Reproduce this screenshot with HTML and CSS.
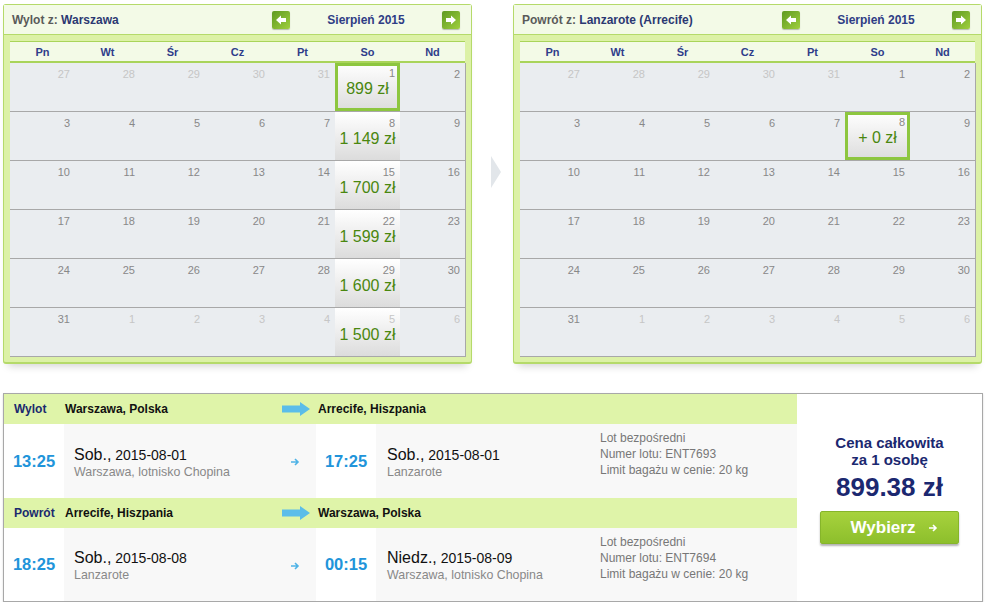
FILE: index.html
```html
<!DOCTYPE html>
<html lang="pl">
<head>
  <meta charset="UTF-8">
  <title>Wybór lotu</title>
  <link rel="stylesheet" href="styles.css">
</head>
<body>
  <div class="page">
    <div class="calendars">
      <div class="panel">
        <div class="panel-head">
          <div class="route"><span class="route-label">Wylot z:</span> Warszawa</div>
          <div class="month-nav">
            <span class="nav-btn"><svg width="10" height="10" viewBox="0 0 10 10"><path d="M0 5 L5 0.5 V3 H10 V7 H5 V9.5 Z" fill="#fff"/></svg></span>
            <span class="month">Sierpień 2015</span>
            <span class="nav-btn"><svg width="10" height="10" viewBox="0 0 10 10"><path d="M10 5 L5 0.5 V3 H0 V7 H5 V9.5 Z" fill="#fff"/></svg></span>
          </div>
        </div>
        <div class="panel-body">
          <div class="days">
            <span>Pn</span><span>Wt</span><span>Śr</span><span>Cz</span><span>Pt</span><span>So</span><span>Nd</span>
          </div>
          <div class="cells">
            <div class="cell other"><span class="num">27</span></div>
            <div class="cell other"><span class="num">28</span></div>
            <div class="cell other"><span class="num">29</span></div>
            <div class="cell other"><span class="num">30</span></div>
            <div class="cell other"><span class="num">31</span></div>
            <div class="cell priced selected"><span class="num">1</span><span class="price">899 zł</span></div>
            <div class="cell"><span class="num">2</span></div>

            <div class="cell"><span class="num">3</span></div>
            <div class="cell"><span class="num">4</span></div>
            <div class="cell"><span class="num">5</span></div>
            <div class="cell"><span class="num">6</span></div>
            <div class="cell"><span class="num">7</span></div>
            <div class="cell priced"><span class="num">8</span><span class="price">1 149 zł</span></div>
            <div class="cell"><span class="num">9</span></div>

            <div class="cell"><span class="num">10</span></div>
            <div class="cell"><span class="num">11</span></div>
            <div class="cell"><span class="num">12</span></div>
            <div class="cell"><span class="num">13</span></div>
            <div class="cell"><span class="num">14</span></div>
            <div class="cell priced"><span class="num">15</span><span class="price">1 700 zł</span></div>
            <div class="cell"><span class="num">16</span></div>

            <div class="cell"><span class="num">17</span></div>
            <div class="cell"><span class="num">18</span></div>
            <div class="cell"><span class="num">19</span></div>
            <div class="cell"><span class="num">20</span></div>
            <div class="cell"><span class="num">21</span></div>
            <div class="cell priced"><span class="num">22</span><span class="price">1 599 zł</span></div>
            <div class="cell"><span class="num">23</span></div>

            <div class="cell"><span class="num">24</span></div>
            <div class="cell"><span class="num">25</span></div>
            <div class="cell"><span class="num">26</span></div>
            <div class="cell"><span class="num">27</span></div>
            <div class="cell"><span class="num">28</span></div>
            <div class="cell priced"><span class="num">29</span><span class="price">1 600 zł</span></div>
            <div class="cell"><span class="num">30</span></div>

            <div class="cell"><span class="num">31</span></div>
            <div class="cell other"><span class="num">1</span></div>
            <div class="cell other"><span class="num">2</span></div>
            <div class="cell other"><span class="num">3</span></div>
            <div class="cell other"><span class="num">4</span></div>
            <div class="cell other priced"><span class="num">5</span><span class="price">1 500 zł</span></div>
            <div class="cell other"><span class="num">6</span></div>
          </div>
        </div>
      </div>

      <div class="between"><span class="tri"></span></div>

      <div class="panel">
        <div class="panel-head">
          <div class="route"><span class="route-label">Powrót z:</span> Lanzarote (Arrecife)</div>
          <div class="month-nav">
            <span class="nav-btn"><svg width="10" height="10" viewBox="0 0 10 10"><path d="M0 5 L5 0.5 V3 H10 V7 H5 V9.5 Z" fill="#fff"/></svg></span>
            <span class="month">Sierpień 2015</span>
            <span class="nav-btn"><svg width="10" height="10" viewBox="0 0 10 10"><path d="M10 5 L5 0.5 V3 H0 V7 H5 V9.5 Z" fill="#fff"/></svg></span>
          </div>
        </div>
        <div class="panel-body">
          <div class="days">
            <span>Pn</span><span>Wt</span><span>Śr</span><span>Cz</span><span>Pt</span><span>So</span><span>Nd</span>
          </div>
          <div class="cells">
            <div class="cell other"><span class="num">27</span></div>
            <div class="cell other"><span class="num">28</span></div>
            <div class="cell other"><span class="num">29</span></div>
            <div class="cell other"><span class="num">30</span></div>
            <div class="cell other"><span class="num">31</span></div>
            <div class="cell"><span class="num">1</span></div>
            <div class="cell"><span class="num">2</span></div>

            <div class="cell"><span class="num">3</span></div>
            <div class="cell"><span class="num">4</span></div>
            <div class="cell"><span class="num">5</span></div>
            <div class="cell"><span class="num">6</span></div>
            <div class="cell"><span class="num">7</span></div>
            <div class="cell priced selected"><span class="num">8</span><span class="price">+ 0 zł</span></div>
            <div class="cell"><span class="num">9</span></div>

            <div class="cell"><span class="num">10</span></div>
            <div class="cell"><span class="num">11</span></div>
            <div class="cell"><span class="num">12</span></div>
            <div class="cell"><span class="num">13</span></div>
            <div class="cell"><span class="num">14</span></div>
            <div class="cell"><span class="num">15</span></div>
            <div class="cell"><span class="num">16</span></div>

            <div class="cell"><span class="num">17</span></div>
            <div class="cell"><span class="num">18</span></div>
            <div class="cell"><span class="num">19</span></div>
            <div class="cell"><span class="num">20</span></div>
            <div class="cell"><span class="num">21</span></div>
            <div class="cell"><span class="num">22</span></div>
            <div class="cell"><span class="num">23</span></div>

            <div class="cell"><span class="num">24</span></div>
            <div class="cell"><span class="num">25</span></div>
            <div class="cell"><span class="num">26</span></div>
            <div class="cell"><span class="num">27</span></div>
            <div class="cell"><span class="num">28</span></div>
            <div class="cell"><span class="num">29</span></div>
            <div class="cell"><span class="num">30</span></div>

            <div class="cell"><span class="num">31</span></div>
            <div class="cell other"><span class="num">1</span></div>
            <div class="cell other"><span class="num">2</span></div>
            <div class="cell other"><span class="num">3</span></div>
            <div class="cell other"><span class="num">4</span></div>
            <div class="cell other"><span class="num">5</span></div>
            <div class="cell other"><span class="num">6</span></div>
          </div>
        </div>
      </div>
    </div>

    <div class="summary">
      <div class="flights">
        <div class="leg-head">
          <span class="leg-label">Wylot</span>
          <span class="leg-from">Warszawa, Polska
            <svg class="big-arrow" width="28" height="14" viewBox="0 0 28 14"><path d="M0 3.5 H18 V0 L28 7 L18 14 V10.5 H0 Z" fill="#5bbde9"/></svg>
          </span>
          <span class="leg-to">Arrecife, Hiszpania</span>
        </div>
        <div class="leg-row">
          <div class="time">13:25</div>
          <div class="place">
            <div>
              <div class="date"><span class="dow">Sob.,</span> 2015-08-01</div>
              <div class="airport">Warszawa, lotnisko Chopina</div>
            </div>
            <svg class="small-arrow" width="9" height="8" viewBox="0 0 9 8"><path d="M0 4 H7 M4 1 L7 4 L4 7" stroke="#4fb3e6" stroke-width="1.6" fill="none"/></svg>
          </div>
          <div class="time">17:25</div>
          <div class="place arrival">
            <div>
              <div class="date"><span class="dow">Sob.,</span> 2015-08-01</div>
              <div class="airport">Lanzarote</div>
            </div>
          </div>
          <div class="info">
            Lot bezpośredni<br>
            Numer lotu: ENT7693<br>
            Limit bagażu w cenie: 20 kg
          </div>
        </div>

        <div class="leg-head">
          <span class="leg-label">Powrót</span>
          <span class="leg-from">Arrecife, Hiszpania
            <svg class="big-arrow" width="28" height="14" viewBox="0 0 28 14"><path d="M0 3.5 H18 V0 L28 7 L18 14 V10.5 H0 Z" fill="#5bbde9"/></svg>
          </span>
          <span class="leg-to">Warszawa, Polska</span>
        </div>
        <div class="leg-row">
          <div class="time">18:25</div>
          <div class="place">
            <div>
              <div class="date"><span class="dow">Sob.,</span> 2015-08-08</div>
              <div class="airport">Lanzarote</div>
            </div>
            <svg class="small-arrow" width="9" height="8" viewBox="0 0 9 8"><path d="M0 4 H7 M4 1 L7 4 L4 7" stroke="#4fb3e6" stroke-width="1.6" fill="none"/></svg>
          </div>
          <div class="time">00:15</div>
          <div class="place arrival">
            <div>
              <div class="date"><span class="dow">Niedz.,</span> 2015-08-09</div>
              <div class="airport">Warszawa, lotnisko Chopina</div>
            </div>
          </div>
          <div class="info">
            Lot bezpośredni<br>
            Numer lotu: ENT7694<br>
            Limit bagażu w cenie: 20 kg
          </div>
        </div>
      </div>

      <div class="total">
        <div class="total-label">Cena całkowita<br>za 1 osobę</div>
        <div class="total-price">899.38 zł</div>
        <button class="choose">Wybierz
          <svg width="9" height="8" viewBox="0 0 9 8"><path d="M0 4 H7 M4 1 L7 4 L4 7" stroke="#fff" stroke-width="1.6" fill="none"/></svg>
        </button>
      </div>
    </div>
  </div>
</body>
</html>
```

FILE: styles.css
```css
body {
  margin: 0;
  font-family: 'Liberation Sans', Arial, sans-serif;
  background-color: #fff;
  color: #222;
}
.page {
  width: 979px;
  padding: 4px 0 0 3px;
}

/* kalendarze */
.calendars {
  display: flex;
}
.panel {
  width: 469px;
  box-sizing: border-box;
  border: 1px solid #b5da6a;
  border-bottom-width: 2px;
  border-radius: 3px;
  background-color: #dcf1a6;
  box-shadow: 0 7px 8px -5px rgba(0,0,0,0.18);
}
.panel-head {
  height: 29px;
  display: flex;
  align-items: center;
  justify-content: space-between;
  padding: 0 11px 0 8px;
  background-color: #f3fae7;
  border-bottom: 1px solid #b5da6a;
  font-size: 12px;
  font-weight: bold;
  color: #2b3872;
}
.route-label {
  color: #5a5a5a;
}
.month-nav {
  width: 188px;
  display: flex;
  align-items: center;
  justify-content: space-between;
}
.month {
  color: #2f3d85;
}
.nav-btn {
  width: 18px;
  height: 18px;
  display: flex;
  align-items: center;
  justify-content: center;
  border-radius: 2px;
  background: linear-gradient(135deg, #5f9a22, #9fcf3e);
  box-shadow: 0 1px 1px rgba(0,0,0,0.25);
}
.panel-body {
  padding: 6px 6px 5px 6px;
}
.days {
  display: grid;
  grid-template-columns: repeat(7, 65px);
  height: 19px;
  align-items: center;
  background-color: #f3fae7;
  border-top: 1px solid #a9d45a;
  border-bottom: 2px solid #a9d45a;
  font-size: 11px;
  font-weight: bold;
  color: #2f3d8a;
  text-align: center;
}
.cells {
  display: grid;
  grid-template-columns: repeat(7, 65px);
  grid-auto-rows: 49px;
  border-left: 1px solid #a8a8a8;
}
.cell {
  box-sizing: border-box;
  border-right: 1px solid #a8a8a8;
  border-bottom: 1px solid #a8a8a8;
  background-color: #eaedf0;
  display: flex;
  flex-direction: column;
  align-items: center;
  margin-left: -1px;
}
.num {
  align-self: flex-end;
  padding: 5px 5px 0 0;
  font-size: 11px;
  line-height: 12px;
  color: #888;
}
.other .num {
  color: #c6c6c6;
}
.priced {
  background: linear-gradient(#ffffff, #dcdcdc);
}
.price {
  margin-top: 1px;
  font-size: 16px;
  color: #4a870f;
}
.selected {
  box-shadow: inset 0 0 0 3px #8dc63f;
}
.selected .num {
  padding: 4px 5px 0 0;
}
.between {
  width: 41px;
  display: flex;
  justify-content: flex-start;
}
.tri {
  margin: 152px 0 0 19px;
  width: 0;
  height: 0;
  border-left: 10px solid #e2e6ea;
  border-top: 16px solid transparent;
  border-bottom: 16px solid transparent;
}

/* podsumowanie */
.summary {
  margin-top: 29px;
  width: 980px;
  box-sizing: border-box;
  display: flex;
  border: 1px solid #a8a8a8;
  box-shadow: 0 1px 2px rgba(0,0,0,0.15);
}
.flights {
  width: 793px;
}
.leg-head,
.leg-row {
  display: grid;
  grid-template-columns: 60px 252px 60px 214px 207px;
}
.leg-head {
  height: 30px;
  align-items: center;
  background-color: #dff4a9;
  font-size: 12px;
  font-weight: bold;
  color: #111;
}
.leg-label {
  padding-left: 10px;
  color: #1b2a6e;
}
.leg-from {
  display: flex;
  align-items: center;
  justify-content: space-between;
  padding: 0 6px 0 1px;
}
.leg-to {
  grid-column: span 2;
  padding-left: 2px;
}
.leg-row {
  height: 74px;
}
.leg-row:last-child {
  height: 73px;
}
.time {
  display: flex;
  align-items: center;
  justify-content: center;
  font-size: 16.5px;
  font-weight: bold;
  color: #2194da;
  background-color: #fff;
}
.place {
  display: flex;
  align-items: center;
  justify-content: space-between;
  padding: 2px 16px 0 10px;
  background-color: #f8f8f8;
}
.place.arrival {
  padding-left: 11px;
}
.date {
  font-size: 14px;
  color: #111;
}
.dow {
  font-size: 16px;
}
.airport {
  margin-top: 1px;
  font-size: 12.4px;
  color: #888;
}
.info {
  padding: 6px 0 0 10px;
  background-color: #f8f8f8;
  font-size: 12px;
  line-height: 16px;
  color: #777;
}
.total {
  flex: 1;
  display: flex;
  flex-direction: column;
  align-items: center;
  padding-top: 40px;
  background-color: #fff;
  color: #1b2870;
  text-align: center;
}
.total-label {
  font-size: 15px;
  font-weight: bold;
  line-height: 17px;
}
.total-price {
  margin-top: 4px;
  font-size: 26px;
  font-weight: bold;
}
.choose {
  margin-top: 8px;
  width: 139px;
  height: 33px;
  display: flex;
  align-items: center;
  justify-content: center;
  gap: 14px;
  border: 1px solid #86b52a;
  border-radius: 2px;
  background: linear-gradient(#a7d23d, #8dbf2c);
  box-shadow: 0 2px 2px rgba(0,0,0,0.3);
  font-family: 'Liberation Sans', Arial, sans-serif;
  font-size: 17px;
  font-weight: bold;
  color: #fff;
  padding: 0 0 0 10px;
}
```
